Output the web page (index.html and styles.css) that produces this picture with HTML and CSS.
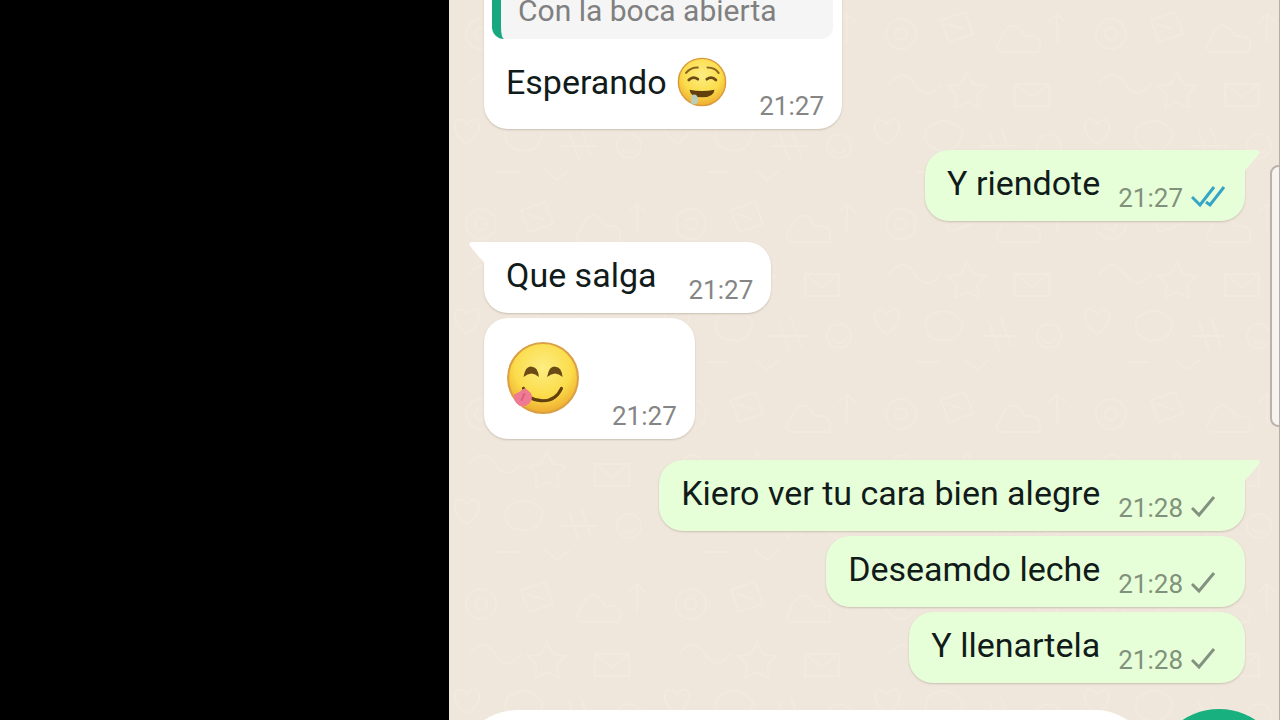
FILE: index.html
```html
<!DOCTYPE html>
<html lang="es">
<head>
    <meta charset="UTF-8">
    <meta name="viewport" content="width=device-width, initial-scale=1.0">
    <title>Chat</title>
    <link rel="stylesheet" href="styles.css">
</head>
<body>

    <!-- Shared icons -->
    <svg class="sprite" aria-hidden="true">
        <defs>
            <symbol id="check" viewBox="0 0 36 26">
                <path d="M1 14 L8 21 L23 3" fill="none" stroke="currentColor" stroke-width="3"/>
            </symbol>
            <symbol id="double-check" viewBox="0 0 36 26">
                <path d="M1 13 L9 21 L23 3 M15 18 L19 21 L33 3" fill="none" stroke="currentColor" stroke-width="3"/>
            </symbol>
            <radialGradient id="face" cx="50%" cy="35%" r="68%">
                <stop offset="0" stop-color="#fdee82"/>
                <stop offset="0.6" stop-color="#fbdc4b"/>
                <stop offset="1" stop-color="#eca52b"/>
            </radialGradient>
        </defs>
    </svg>

    <div class="page">
        <div class="side"></div>

        <main class="chat">
            <svg class="wallpaper" aria-hidden="true">
                <pattern id="doodles" width="210" height="190" patternUnits="userSpaceOnUse">
                    <g fill="none" stroke="#f5ede4" stroke-width="2" stroke-linecap="round">
                        <circle cx="32" cy="34" r="15"/>
                        <circle cx="32" cy="34" r="6"/>
                        <path d="M72 20 l24 -8 l8 22 l-24 8 z M78 24 l16 5"/>
                        <path d="M130 42 q12 -30 26 -6 q20 -2 14 16 h-36 q-10 -2 -4 -10"/>
                        <path d="M188 14 v28 M180 22 l8 -8 l8 8"/>
                        <path d="M20 84 q14 -18 26 0 t26 0"/>
                        <path d="M98 72 l6 12 l13 2 l-9 9 l2 13 l-12 -6 l-12 6 l2 -13 l-9 -9 l13 -2 z"/>
                        <path d="M146 84 h34 v22 h-34 z M146 84 l17 13 l17 -13"/>
                        <path d="M18 124 c-12 -14 -20 8 0 20 c20 -12 12 -34 0 -20"/>
                        <path d="M58 128 q20 -16 36 4 q-4 22 -24 18 q-18 -4 -12 -22"/>
                        <path d="M120 132 l10 28 M132 128 l10 28 M112 146 h36"/>
                        <circle cx="180" cy="146" r="12"/>
                        <path d="M174 150 q6 6 12 0 M48 172 h22 M96 170 l12 10 l12 -10"/>
                    </g>
                </pattern>
                <rect width="100%" height="100%" fill="url(#doodles)"/>
            </svg>

            <section class="messages">
                <div class="group">
                    <article class="bubble in quoted">
                        <blockquote class="quote">Con la boca abierta</blockquote>
                        <div class="line">
                            <p class="text">Esperando
                                <svg class="emoji" viewBox="0 0 72 72" role="img" aria-label="Cara babeando">
                                    <circle cx="36" cy="36" r="34" fill="url(#face)" stroke="#d9993a" stroke-width="2"/>
                                    <path d="M13 23 q6 -8 17 -8 M44 15 q11 0 16 8" fill="none" stroke="#8a6420" stroke-width="3" stroke-linecap="round"/>
                                    <path d="M17 33 q6 -6 13 -1 M43 32 q7 -5 13 1" fill="none" stroke="#6b4a16" stroke-width="4" stroke-linecap="round"/>
                                    <path d="M18 47 q18 4 36 0 q-1 11 -18 11 q-17 0 -18 -11" fill="#61400e"/>
                                    <path d="M21 55 q7 -3 9 4 v7 q-5 5 -10 0 z" fill="#b9cdbd"/>
                                </svg>
                            </p>
                            <time class="time">21:27</time>
                        </div>
                    </article>
                </div>

                <div class="group">
                    <article class="bubble out first">
                        <svg class="tail" viewBox="0 0 30 22" aria-hidden="true"><path d="M0 0 H27 Q32 1 28 5 L19 16 Q15 19 15 22 H0 z"/></svg>
                        <div class="line">
                            <p class="text">Y riendote</p>
                            <time class="time">21:27</time>
                            <svg class="ticks read" role="img" aria-label="Leído"><use href="#double-check"/></svg>
                        </div>
                    </article>
                </div>

                <div class="group">
                    <article class="bubble in first">
                        <svg class="tail" viewBox="0 0 30 22" aria-hidden="true"><path d="M30 0 H3 Q-2 1 2 5 L11 16 Q15 19 15 22 H30 z"/></svg>
                        <div class="line">
                            <p class="text">Que salga</p>
                            <time class="time">21:27</time>
                        </div>
                    </article>
                    <article class="bubble in">
                        <div class="line">
                            <svg class="emoji big" viewBox="0 0 72 72" role="img" aria-label="Cara saboreando comida">
                                <circle cx="36" cy="36" r="34" fill="url(#face)" stroke="#dba045" stroke-width="2"/>
                                <path d="M17 35 Q19 24 25 25 Q31 25 32 35 Q25 28 17 35 M40 35 Q42 24 48 25 Q54 25 55 35 Q48 28 40 35" fill="#6b4a16"/>
                                <path d="M17 46 q3 11 17 12 q14 1 20 -12" fill="none" stroke="#61400e" stroke-width="3" stroke-linecap="round"/>
                                <path d="M18 46 Q27 50 25 57 Q22 65 13 63 Q6 58 8 52 Q13 50 18 46" fill="#ee7a93"/>
                                <path d="M18 51 L15 58" stroke="#d9607c" stroke-width="2"/>
                            </svg>
                            <time class="time">21:27</time>
                        </div>
                    </article>
                </div>

                <div class="group">
                    <article class="bubble out first">
                        <svg class="tail" viewBox="0 0 30 22" aria-hidden="true"><path d="M0 0 H27 Q32 1 28 5 L19 16 Q15 19 15 22 H0 z"/></svg>
                        <div class="line">
                            <p class="text">Kiero ver tu cara bien alegre</p>
                            <time class="time">21:28</time>
                            <svg class="ticks" role="img" aria-label="Enviado"><use href="#check"/></svg>
                        </div>
                    </article>
                    <article class="bubble out">
                        <div class="line">
                            <p class="text">Deseamdo leche</p>
                            <time class="time">21:28</time>
                            <svg class="ticks" role="img" aria-label="Enviado"><use href="#check"/></svg>
                        </div>
                    </article>
                    <article class="bubble out">
                        <div class="line">
                            <p class="text">Y llenartela</p>
                            <time class="time">21:28</time>
                            <svg class="ticks" role="img" aria-label="Enviado"><use href="#check"/></svg>
                        </div>
                    </article>
                </div>
            </section>

            <form class="composer">
                <input class="message-input" type="text" aria-label="Mensaje">
                <button class="mic" type="button" aria-label="Grabar audio"></button>
            </form>

            <div class="edge-handle"></div>
        </main>
    </div>

</body>
</html>
```
FILE: styles.css
```css
* {
    box-sizing: border-box;
}
body {
    margin: 0;
    font-family: Roboto, "Liberation Sans", sans-serif;
    background-color: #000;
}
.sprite {
    position: absolute;
    width: 0;
    height: 0;
}
.page {
    display: flex;
    height: 100vh;
    overflow: hidden;
}
.side {
    flex: 0 0 35%;
    background-color: #000;
}
.chat {
    position: relative;
    flex: 1;
    display: flex;
    flex-direction: column;
    overflow: hidden;
    background-color: #f0e7dc;
    border-left: 1px solid #000;
    border-right: 1px solid #b5aea8;
}
.wallpaper {
    position: absolute;
    inset: 0;
    width: 100%;
    height: 100%;
    opacity: 0.4;
}

/* Messages */
.messages {
    position: relative;
    flex: 1;
    min-height: 0;
    display: flex;
    flex-direction: column;
    justify-content: flex-end;
    gap: 21px;
    padding: 0 34px 27px 35px;
}
.group {
    display: flex;
    flex-direction: column;
    gap: 5px;
}
.bubble {
    position: relative;
    padding: 13px 18px 13px 22px;
    border-radius: 24px;
    box-shadow: 0 1px 2px rgba(90, 70, 50, 0.25);
}
.in {
    align-self: flex-start;
    background-color: #fff;
}
.out {
    align-self: flex-end;
    background-color: #e7ffd8;
}
.in.first {
    border-top-left-radius: 0;
}
.out.first {
    border-top-right-radius: 0;
}
.line {
    display: flex;
    align-items: flex-end;
    gap: 8px;
}
.text {
    margin: 0;
    font-size: 34px;
    line-height: 40px;
    padding-bottom: 5px;
    color: #111b1a;
    white-space: nowrap;
}
.time {
    font-size: 26px;
    line-height: 30px;
    color: #858585;
    margin-left: 10px;
    margin-bottom: -5px;
}
.in .time {
    margin-left: auto;
    padding-left: 24px;
}
.out .time {
    color: #81917c;
}
.ticks {
    width: 36px;
    height: 26px;
    color: #83917f;
    margin-bottom: -2px;
}
.ticks.read {
    color: #35a5c5;
}
.emoji {
    width: 50px;
    height: 50px;
    margin: -4px 0 0 2px;
    vertical-align: -13px;
}
.emoji.big {
    width: 74px;
    height: 74px;
    margin: 10px 0 11px;
}
.tail {
    position: absolute;
    top: 0;
    width: 30px;
    height: 22px;
}
.in .tail {
    left: -15px;
    fill: #fff;
}
.out .tail {
    right: -15px;
    fill: #e7ffd8;
}

/* Reply preview */
.quoted {
    padding-top: 8px;
}
.quote {
    margin: 0 -9px 22px -14px;
    padding: 12px 20px 12px 17px;
    border-left: 9px solid #18a880;
    border-radius: 12px;
    background-color: #f5f5f5;
    color: #808080;
    font-size: 30px;
    line-height: 32px;
}
.quoted .line {
    min-width: 318px;
}
.quoted .text {
    padding-bottom: 9px;
}

/* Bottom bar, runs on below the fold */
.composer {
    position: relative;
    flex: 0 0 10px;
    min-height: 0;
    height: 10px;
    display: flex;
    align-items: flex-start;
    padding-left: 10px;
}
.message-input {
    flex: 1;
    min-width: 0;
    height: 116px;
    padding: 0 40px;
    border: none;
    border-radius: 58px;
    background-color: #fff;
    font-size: 34px;
    font-family: inherit;
}
.mic {
    flex: none;
    width: 132px;
    height: 132px;
    border: none;
    border-radius: 50%;
    background-color: #18b07f;
    margin: -1px -6px 0 0;
}

/* Screen edge panel handle */
.edge-handle {
    position: absolute;
    top: 165px;
    right: -8px;
    width: 17px;
    height: 262px;
    border: 2px solid #b9b3ad;
    border-radius: 9px;
    background-color: #f7f3ef;
}
```
